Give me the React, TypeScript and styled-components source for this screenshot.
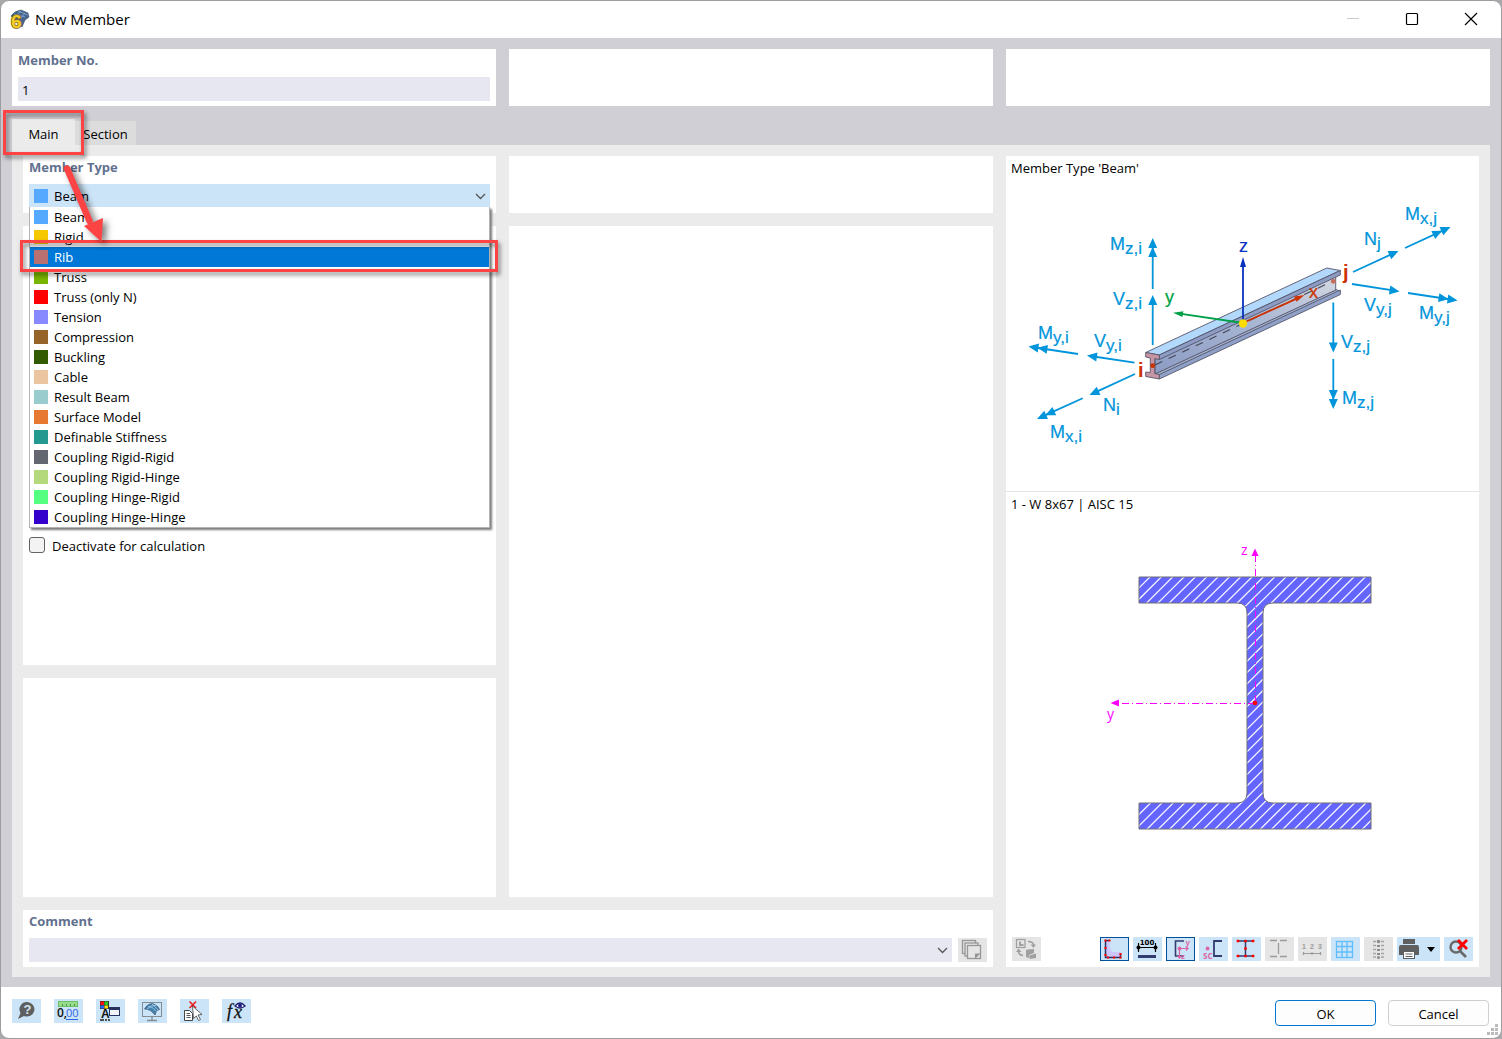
import React, { useState } from "react";
import styled, { createGlobalStyle, css } from "styled-components";

const GlobalStyle = createGlobalStyle`
  *, *::before, *::after { box-sizing: border-box; }
  body {
    margin: 0;
    background: #a9a9ac;
    font-family: "Open Sans", "Segoe UI", sans-serif;
    font-size: 13px;
    line-height: 20px;
    color: #000;
  }
  button, input, select { font: inherit; color: inherit; }
  svg { display: block; }
`;

const Window = styled.div`
  display: flex;
  flex-direction: column;
  min-height: 100vh;
  border: 1px solid #9d9d9f;
  border-radius: 9px;
  background: #fff;
  overflow: hidden;
`;

const TitleBar = styled.header`
  display: flex;
  align-items: center;
  height: 37px;
  padding: 0 8px;
`;

const Title = styled.h1`
  flex: 1;
  margin: 0 0 2px 6px;
  font-size: 15px;
  font-weight: 400;
`;

const WindowButtons = styled.div`
  display: flex;
  gap: 29px;
  padding-right: 7px;
  margin-bottom: 2px;
`;

const WindowButton = styled.button`
  width: 30px;
  height: 30px;
  padding: 0;
  border: 0;
  background: none;
`;

const Body = styled.main`
  flex: 1;
  display: flex;
  flex-direction: column;
  padding: 11px 11px 10px;
  background: #d0cfd5;
`;

const TopRow = styled.div`
  display: grid;
  grid-template-columns: repeat(3, 1fr);
  gap: 13px;
`;

const Card = styled.section`
  min-height: 57px;
  padding: 0 6px 5px;
  background: #fff;
`;

const CardTitle = styled.label`
  display: block;
  font-weight: 700;
  color: #62718f;
  line-height: 22px;
`;

const NumberInput = styled.input`
  display: block;
  width: 100%;
  height: 24px;
  margin-top: 6px;
  padding: 2px 4px 0;
  border: 0;
  background: #e7e7f1;
`;

const Tabs = styled.nav`
  display: flex;
  align-items: flex-end;
  margin-top: 13px;
`;

const TabSlot = styled.div`
  position: relative;
`;

const Tab = styled.button<{ $active?: boolean; $width: number }>`
  display: block;
  width: ${(p) => p.$width}px;
  height: ${(p) => (p.$active ? 26 : 24)}px;
  padding: ${(p) => (p.$active ? 4 : 2)}px 0 0;
  border: 0;
  background: ${(p) => (p.$active ? "#ebebeb" : "#dcdcdc")};
`;

const Panel = styled.div`
  flex: 1;
  display: grid;
  grid-template-columns: 1fr calc((100% - 4px) / 3) 1fr;
  grid-template-rows: 57px 2fr 1fr 57px;
  gap: 13px;
  padding: 11px 11px 10px;
  background: #ebebeb;
`;

const CenterCard = styled(Card)`
  grid-column: 2;
  grid-row: 2 / 4;
`;

const OptionsCard = styled(Card)`
  padding-top: 310px;
`;

const CommentCard = styled(Card)`
  grid-column: 1 / 3;
`;

const PreviewCard = styled(Card)`
  grid-column: 3;
  grid-row: 1 / 5;
  display: flex;
  flex-direction: column;
  padding: 0;
`;

const SelectBox = styled.div`
  position: relative;
  flex: 1;
`;

const Select = styled.select<{ $tone: "blue" | "plain" }>`
  display: block;
  width: 100%;
  height: ${(p) => (p.$tone === "blue" ? 23 : 24)}px;
  padding: 0 20px 0 25px;
  border: 0;
  border-radius: 0;
  appearance: none;
  background: ${(p) => (p.$tone === "blue" ? "#cce4f7" : "#e7e7f1")};
`;

const SelectArrow = styled.svg`
  position: absolute;
  right: 4px;
  top: 8px;
  pointer-events: none;
`;

const TypeRow = styled.div`
  position: relative;
  margin-top: 6px;
`;

const Swatch = styled.span<{ $color: string }>`
  width: 14px;
  height: 14px;
  margin-right: 6px;
  background: ${(p) => p.$color};
`;

const SelectSwatch = styled(Swatch)`
  position: absolute;
  left: 5px;
  top: 5px;
`;

const Popup = styled.ul`
  position: absolute;
  z-index: 5;
  top: 100%;
  left: 0;
  right: 0;
  margin: 0;
  padding: 0;
  list-style: none;
  border: 1px solid #b4b4b4;
  border-top: 0;
  background: #fff;
  box-shadow: 2px 2px 2px #7d7d7d;
  clip-path: inset(0 -6px -6px 0);
`;

const Option = styled.li<{ $selected: boolean }>`
  display: flex;
  align-items: center;
  height: 20px;
  padding-left: 4px;
  ${(p) =>
    p.$selected &&
    css`
      background: #0078d7;
      color: #fff;
    `}
`;

const Highlight = styled.span<{ $inset: string }>`
  position: absolute;
  z-index: 8;
  inset: ${(p) => p.$inset};
  border: 3px solid #fd4343;
  filter: drop-shadow(2px 3px 2px rgba(0, 0, 0, 0.5));
  pointer-events: none;
`;

const Pointer = styled.svg`
  position: absolute;
  z-index: 9;
  left: 46px;
  top: 39px;
  overflow: visible;
  filter: drop-shadow(4px 3px 3px rgba(0, 0, 0, 0.5));
  pointer-events: none;
`;

const CheckLabel = styled.label`
  display: flex;
  align-items: center;
  gap: 7px;
`;

const Checkbox = styled.input`
  width: 16px;
  height: 16px;
  margin: 0 0 2px;
  appearance: none;
  border: 1px solid #626262;
  border-radius: 3px;
  background: #f3f3f3;
`;

const CommentRow = styled.div`
  display: flex;
  gap: 6px;
  margin-top: 6px;
`;

const PreviewTop = styled.div`
  height: 336px;
  border-bottom: 1px solid #e5e5e5;
`;

const PreviewBottom = styled.div`
  flex: 1;
  display: flex;
  flex-direction: column;
`;

const Caption = styled.p`
  margin: 0;
  padding: 2px 5px;
`;

const Drawing = styled.svg`
  width: 100%;
  font-family: "Liberation Sans", Arial, sans-serif;
`;

const Toolbar = styled.div`
  display: flex;
  gap: 4px;
  margin-top: auto;
  padding: 0 6px 6px;
`;

const Spacer = styled.div`
  flex: 1;
`;

const IconButton = styled.button<{ $state?: "on" | "off"; $wide?: boolean }>`
  width: ${(p) => (p.$wide ? 43 : 29)}px;
  height: 24px;
  padding: 0;
  border: 0;
  background: ${(p) => (p.$state === "off" ? "#e5e5e5" : "#cce4f7")};
  outline: ${(p) => (p.$state === "on" ? "1px solid #00529b" : "none")};
  outline-offset: -1px;
`;

const Footer = styled.footer`
  position: relative;
  display: flex;
  align-items: center;
  gap: 12px;
  height: 51px;
  padding: 0 12px 0 11px;
`;

const FooterTools = styled.div`
  display: flex;
  gap: 13px;
  flex: 1;
  margin-bottom: 4px;
`;

const ActionButton = styled.button<{ $primary?: boolean }>`
  width: 101px;
  height: 26px;
  margin-top: 1px;
  padding: 2px 0 0;
  border: 1px solid ${(p) => (p.$primary ? "#0078d4" : "#cfcfcf")};
  border-radius: 4px;
  background: #fdfdfd;
  line-height: 20px;
`;

const Grip = styled.svg`
  position: absolute;
  right: 2px;
  bottom: 2px;
`;

const memberTypes: [string, string][] = [
  ["Beam", "#55aaff"],
  ["Rigid", "#f5c800"],
  ["Rib", "#b97070"],
  ["Truss", "#78b400"],
  ["Truss (only N)", "#ff0000"],
  ["Tension", "#8888ff"],
  ["Compression", "#966428"],
  ["Buckling", "#325a00"],
  ["Cable", "#ebc4a0"],
  ["Result Beam", "#99cccc"],
  ["Surface Model", "#e67832"],
  ["Definable Stiffness", "#23998f"],
  ["Coupling Rigid-Rigid", "#646670"],
  ["Coupling Rigid-Hinge", "#b4d97d"],
  ["Coupling Hinge-Rigid", "#55ff7f"],
  ["Coupling Hinge-Hinge", "#3300cc"],
];

const BLUE = "#0095db";

type ArrowProps = { from: [number, number]; to: [number, number]; color?: string; twin?: boolean; half?: number; head?: number };

function Arrow({ from, to, color = BLUE, twin, half = 4.5, head = 10 }: ArrowProps) {
  const dx = to[0] - from[0];
  const dy = to[1] - from[1];
  const len = Math.hypot(dx, dy);
  const angle = (Math.atan2(dy, dx) * 180) / Math.PI;
  return (
    <g transform={`translate(${from[0]} ${from[1]}) rotate(${angle})`} fill={color}>
      <rect x={0} y={-0.9} width={len - 5} height={1.8} />
      <polygon points={`${len},0 ${len - head},${-half} ${len - head},${half}`} />
      {twin && <polygon points={`${len - 9},0 ${len - 9 - head},${-half} ${len - 9 - head},${half}`} />}
    </g>
  );
}

function Force({ x, y, name, sub }: { x: number; y: number; name: string; sub: string }) {
  return (
    <text x={x} y={y} fontSize={18} fill={BLUE} stroke={BLUE} strokeWidth={0.2}>
      {name}
      <tspan dy={4} fontSize={17}>{sub}</tspan>
    </text>
  );
}

function BeamDrawing() {
  return (
    <Drawing viewBox="1006 180 473 310" height={310} role="img" aria-label="Member forces">
      <defs>
        <linearGradient id="web" x1="0" y1="1" x2="1" y2="0">
          <stop offset="0" stopColor="#8c9cc4" />
          <stop offset="0.5" stopColor="#a6b4d2" />
          <stop offset="1" stopColor="#d3d8e2" />
        </linearGradient>
      </defs>
      <g stroke="#56566a" strokeWidth="0.9" strokeLinejoin="round">
        <polygon fill="#a2b0cf" points="1154,374 1159.5,375 1340.5,291.5 1336,289.5" />
        <polygon fill="url(#web)" points="1155,357 1335.7,274 1335.7,290 1155,374" />
        <polygon fill="#b2d8fb" points="1145.7,352.5 1326.7,268 1340.3,270.5 1159.3,355" />
        <polygon fill="#8c9cc4" points="1159.3,355 1340.3,270.5 1340.3,275 1159.3,359.5" />
        <polygon fill="#8fa1c8" points="1159.3,374.5 1340.3,290 1340.3,294.5 1159.3,379" />
        <polygon
          fill="#c795a3"
          points="1145.7,352.5 1159.3,355 1159.3,359.5 1154.7,358.7 1154.7,373.5 1159.3,374.5 1159.3,379 1145.7,376.5 1145.7,372 1150.3,372.5 1150.3,358 1145.7,357"
        />
      </g>
      <path d="M1155 365 L1333 281" stroke="#454555" strokeWidth="1.1" strokeDasharray="8 7" />
      <circle cx="1152.7" cy="365.7" r="2.4" fill="#c83200" />
      <circle cx="1333.3" cy="281.3" r="2.4" fill="#c96b58" />

      <Arrow from={[1243, 323]} to={[1173, 312.7]} color="#00a046" half={3} />
      <Arrow from={[1243, 323]} to={[1243, 257]} color="#0a32be" half={3} />
      <Arrow from={[1243, 323]} to={[1304.5, 295]} color="#cd3200" half={3} />
      <circle cx="1243" cy="323.5" r="4.2" fill="#ffdc00" />

      <Arrow from={[1152.7, 289]} to={[1152.7, 238]} twin />
      <Arrow from={[1152.7, 345]} to={[1152.7, 295]} />
      <Arrow from={[1078, 354]} to={[1028.5, 346.5]} twin />
      <Arrow from={[1134.5, 362.7]} to={[1087, 355.5]} />
      <Arrow from={[1135, 374]} to={[1089.5, 395]} />
      <Arrow from={[1082.7, 398.3]} to={[1037, 419]} twin />
      <Arrow from={[1353, 272]} to={[1398.5, 251]} />
      <Arrow from={[1405, 248]} to={[1450.5, 227]} twin />
      <Arrow from={[1352, 284]} to={[1399.5, 291.5]} />
      <Arrow from={[1408, 293]} to={[1457.5, 300.5]} twin />
      <Arrow from={[1333.3, 302.5]} to={[1333.3, 352.5]} />
      <Arrow from={[1333.3, 359]} to={[1333.3, 409]} twin />

      <Force x={1110} y={249.5} name="M" sub="z,i" />
      <Force x={1113} y={304.5} name="V" sub="z,i" />
      <Force x={1038} y={338.5} name="M" sub="y,i" />
      <Force x={1094} y={347} name="V" sub="y,i" />
      <Force x={1103} y={411} name="N" sub="i" />
      <Force x={1050} y={438} name="M" sub="x,i" />
      <Force x={1364} y={245} name="N" sub="j" />
      <Force x={1405} y={220} name="M" sub="x,j" />
      <Force x={1364} y={311} name="V" sub="y,j" />
      <Force x={1419} y={318.5} name="M" sub="y,j" />
      <Force x={1341} y={348} name="V" sub="z,j" />
      <Force x={1342} y={403.5} name="M" sub="z,j" />
      <g fontSize={18} strokeWidth="0.2">
        <text x={1165} y={303} fill="#00a046" stroke="#00a046">y</text>
        <text x={1239} y={252} fill="#0a32be" stroke="#0a32be">z</text>
        <text x={1309} y={298} fill="#cd3200" stroke="#cd3200">x</text>
      </g>
      <g fontSize={20} fontWeight={700} fill="#cd3200">
        <text x={1138} y={377}>i</text>
        <text x={1343} y={279}>j</text>
      </g>
    </Drawing>
  );
}

const SECTION_OUTLINE =
  "M1139 577H1371V603H1273Q1263 603 1263 613V793Q1263 803 1273 803H1371V829H1139V803H1237Q1247 803 1247 793V613Q1247 603 1237 603H1139Z";

// Each hatch line satisfies x + y = constant.
const HATCH_STEP = 11.33;
const hatchLines = Array.from({ length: 44 }, (_, i) => {
  const sum = 1715.6 + i * HATCH_STEP;
  return `M${sum - 830} 830L${sum - 576} 576`;
}).join("");

function SectionDrawing() {
  return (
    <Drawing viewBox="1006 516 473 414" height={414} role="img" aria-label="Section W 8x67">
      <defs>
        <clipPath id="section">
          <path d={SECTION_OUTLINE} />
        </clipPath>
      </defs>
      <path d={SECTION_OUTLINE} fill="#6464ff" />
      <path d={hatchLines} clipPath="url(#section)" stroke="#f4f4ff" strokeWidth="1.3" />
      <path d={SECTION_OUTLINE} fill="none" stroke="#6e6e74" strokeWidth="1" />
      <g stroke="#ff00ff" strokeWidth="1" strokeDasharray="7 3 1 3">
        <path d="M1255.5 702V556" />
        <path d="M1255 703.5H1118" />
      </g>
      <g fill="#ff00ff">
        <polygon points="1255,548.5 1251.5,556 1258.5,556" />
        <polygon points="1110.5,703 1119,699.5 1119,706.5" />
        <text x="1241" y="555" fontSize="14" fontFamily="Open Sans">z</text>
        <text x="1107" y="719" fontSize="14" fontFamily="Open Sans">y</text>
      </g>
      <circle cx="1255" cy="703" r="2.3" fill="red" />
    </Drawing>
  );
}

const Glyph = ({ children, w = 29 }: { children: React.ReactNode; w?: number }) => (
  <svg width={w} height={24} viewBox={`0 0 ${w} 24`} fill="none" aria-hidden="true">
    {children}
  </svg>
);

const dots = (points: [number, number][], r = 1.3) =>
  points.map(([x, y]) => <rect key={`${x}-${y}`} x={x - r} y={y - r} width={2 * r} height={2 * r} rx={0.5} fill="#f00" />);

const OutlineIcon = () => (
  <Glyph>
    <path d="M5.5 3.5H9.5Q9.5 15 13 15H20.5V20.5H5.5Z" fill="#ccc5fb" />
    <path d="M9.5 3.5H5.5V20.5H20.5V17" stroke="#28325f" strokeWidth="1.5" />
    {dots([[5.5, 3.5], [9.5, 3.5], [5.5, 11], [5.5, 18], [8, 20.5], [14, 20.5], [20.5, 20.5], [20.5, 17]], 1.1)}
  </Glyph>
);

const DimensionIcon = () => (
  <Glyph>
    <text x="14" y="8" fontSize="7" fontWeight="700" fontFamily="DejaVu Sans" textAnchor="middle" fill="#000">100</text>
    <path d="M5.5 6V15M22.5 6V15M5 10.5H23" stroke="#000" strokeWidth="1.2" />
    <circle cx="5.5" cy="10.5" r="2" fill="#000" />
    <circle cx="22.5" cy="10.5" r="2" fill="#000" />
    <rect x="5" y="18" width="18" height="3" fill="#323c6e" />
  </Glyph>
);

const AxesIcon = () => (
  <Glyph>
    <path d="M18 4H9.5V19H18" stroke="#323c6e" strokeWidth="1.6" />
    <path d="M13 11.5H22M13.5 11.5V21M20 9.5L22 11.5L20 13.5M11.5 19L13.5 21L15.5 19" stroke="#dc64a5" strokeWidth="1.2" />
    <circle cx="13.5" cy="11.5" r="1.9" fill="#dc64a5" />
    <text x="19.5" y="8" fontSize="8" fontWeight="700" fontFamily="Liberation Sans" fill="#dc64a5">y</text>
    <text x="15" y="22" fontSize="8" fontWeight="700" fontFamily="Liberation Sans" fill="#dc64a5">z</text>
  </Glyph>
);

const ShearCenterIcon = () => (
  <Glyph>
    <path d="M23 4H15V19H23" stroke="#323c6e" strokeWidth="1.8" />
    <circle cx="8.5" cy="11.5" r="1.9" fill="#dc64a5" />
    <text x="4" y="22" fontSize="8" fontFamily="Open Sans" fontWeight="700" fill="#dc64a5">SC</text>
  </Glyph>
);

const BeamPointsIcon = () => (
  <Glyph>
    <path d="M5.5 4H21.5M5.5 19H21.5M13.5 4V19" stroke="#323c6e" strokeWidth="1.5" />
    {dots([[6, 4], [13.5, 4], [21, 4], [13.5, 11.5], [6, 19], [13.5, 19], [21, 19]])}
  </Glyph>
);

const BeamPartsIcon = () => (
  <Glyph>
    <path d="M5 3.5H12M15 3.5H22M5 19.5H12M15 19.5H22M13.5 6V17" stroke="#9b9b9b" strokeWidth="1.3" />
  </Glyph>
);

const NumbersIcon = () => (
  <Glyph>
    <text x="4" y="12" fontSize="7" fontWeight="700" fontFamily="Liberation Sans" fill="#9b9b9b">1</text>
    <text x="12" y="12" fontSize="7" fontWeight="700" fontFamily="Liberation Sans" fill="#9b9b9b">2</text>
    <text x="20" y="12" fontSize="7" fontWeight="700" fontFamily="Liberation Sans" fill="#9b9b9b">3</text>
    <path d="M5 16.5H23M5.5 15V18M14 15V18M22.5 15V18" stroke="#9b9b9b" strokeWidth="1.2" />
  </Glyph>
);

const GridIcon = () => (
  <Glyph>
    <rect x="5.5" y="4.5" width="16" height="16" stroke="#5fbeff" strokeWidth="1.3" />
    <path d="M11 4.5V20.5M16 4.5V20.5M5.5 9.5H21.5M5.5 15H21.5" stroke="#5fbeff" strokeWidth="1.3" />
  </Glyph>
);

const StressIcon = () => (
  <Glyph>
    <g fill="#8c8c8c">
      <circle cx="14.5" cy="4.5" r="1.7" />
      <rect x="13" y="8" width="3" height="2" />
      <rect x="13" y="12" width="3" height="2" />
      <rect x="13" y="16" width="3" height="2" />
      <circle cx="14.5" cy="20.5" r="1.5" />
    </g>
    <path d="M9 4.5H12M17 4.5H20M9 8.5H12M17 8.5H20M9 12.5H12M17 12.5H20M9 16.5H12M17 16.5H20M9 20H12M17 20H20" stroke="#a5a5a5" strokeWidth="1.3" />
  </Glyph>
);

const PrinterIcon = () => (
  <Glyph w={43}>
    <rect x="6" y="2" width="12" height="5" fill="#5f5f5f" />
    <path d="M2 10Q2 8 4 8H20Q22 8 22 10V18H18V14H6V18H2Z" fill="#5f5f5f" />
    <rect x="6.5" y="14.5" width="11" height="7" fill="#fff" stroke="#5f5f5f" />
    <path d="M8.5 17H15.5M8.5 19.5H15.5" stroke="#5f5f5f" />
    <path d="M30 10H38L34 15Z" fill="#000" />
  </Glyph>
);

const ResetZoomIcon = () => (
  <Glyph>
    <circle cx="12" cy="10" r="5.5" stroke="#696969" strokeWidth="2.4" />
    <path d="M16 14L22 20" stroke="#696969" strokeWidth="2.6" />
    <path d="M14 3L23 12M23 3L14 12" stroke="#f00" strokeWidth="2.8" />
  </Glyph>
);

const SwapViewIcon = () => (
  <Glyph>
    <rect x="4.5" y="2.5" width="8.5" height="8" stroke="#a0a0a0" strokeWidth="1.3" />
    <path d="M7 4.5V9H11.5V7H9V4.5Z" fill="#a0a0a0" />
    <path d="M16 4.5Q21 4.5 21.5 8M11 18.5Q6.5 18 6.5 14" stroke="#a0a0a0" strokeWidth="1.6" />
    <path d="M18.5 7.5H24L21.5 11ZM4 15L6.5 11.5L9.5 15Z" fill="#a0a0a0" />
    <path d="M14 13L15.5 12.5L22 12V16L17 18V21L14 20ZM17.5 18.5L24 16.5V21L17.5 22Z" fill="#a0a0a0" />
  </Glyph>
);

const CopiesIcon = () => (
  <Glyph>
    <g stroke="#969696" strokeWidth="1.3" fill="#e5e5e5">
      <rect x="4.5" y="2.5" width="13" height="13" />
      <rect x="7" y="5" width="13" height="13" />
      <rect x="9.5" y="7.5" width="13" height="13" />
    </g>
    <path d="M17 15.5H22.5L17 21Z" fill="#969696" />
  </Glyph>
);

const HelpIcon = () => (
  <Glyph>
    <path d="M15.5 3A7.5 7.3 0 1 1 12 17L6 20L8.5 14A7.5 7.3 0 0 1 15.5 3Z" fill="#5f5f5f" />
    <text x="15.5" y="15" fontSize="13" fontWeight="700" fontFamily="Liberation Sans" textAnchor="middle" fill="#d5e7f5">?</text>
  </Glyph>
);

const UnitsIcon = () => (
  <Glyph>
    <rect x="4.5" y="2.5" width="19" height="5" fill="#96dc8c" stroke="#6ebe64" />
    <path d="M8.5 5V7M12.5 5V7M16.5 5V7M20.5 5V7" stroke="#50964b" />
    <text x="3" y="18" fontSize="12" fontFamily="Open Sans" fontWeight="600" fill="#111">0,</text>
    <text x="12" y="18" fontSize="11" fontFamily="Open Sans" fill="#2d64e6">00</text>
    <path d="M12 20.5H24" stroke="#2d64e6" />
  </Glyph>
);

const DisplayIcon = () => (
  <Glyph>
    <rect x="4" y="2" width="9" height="8" fill="#333" />
    <rect x="4.5" y="2.5" width="3.5" height="3.5" fill="#f11" />
    <rect x="8.5" y="2.5" width="3.5" height="3.5" fill="#2c2" />
    <rect x="4.5" y="6.5" width="3.5" height="3" fill="#26f" />
    <rect x="8.500" y="6.5" width="3.5" height="3" fill="#fd0" />
    <text x="5" y="19" fontSize="12" fontFamily="Liberation Sans" fontWeight="700" fill="#111">A</text>
    <path d="M4 21H8M9 21H11M12 21H14" stroke="#222" strokeWidth="1.5" />
    <rect x="13.5" y="8.5" width="10" height="8" fill="#f3f3fa" stroke="#28325f" />
    <rect x="13" y="8" width="11" height="3" fill="#28325f" />
  </Glyph>
);

const MonitorIcon = () => (
  <Glyph>
    <rect x="4.5" y="3.5" width="19" height="14" stroke="#828c96" />
    <path d="M14 18V21M9 21.5H19" stroke="#828c96" strokeWidth="1.4" />
    <path d="M6.500 10Q9 5 14.5 4.500Q20 6 21.5 10.500L18.500 11.5L17 16Q13 10 6.500 10Z" fill="#4682af" stroke="#37506e" strokeWidth="0.7" />
    <path d="M10 7Q15 8 18 12M14 5Q17 7 20 11M9 10Q13 6 19 6" stroke="#b4dcf5" strokeWidth="0.7" />
  </Glyph>
);

const SelectIcon = () => (
  <Glyph>
    <path d="M4.5 11.5H9.5L12.5 14.5V21.5H4.5Z" fill="#fff" stroke="#444" />
    <path d="M6.5 14.5H10M6.5 16.5H10.5M6.5 18.5H10.5" stroke="#555" />
    <path d="M9.5 2.5L16 9M16 2.5L9.5 9" stroke="#f01414" strokeWidth="1.5" />
    <path d="M12.500 7L22 15.5L18 16L20.5 20.5L18.5 21.5L16.3 17L13.500 19.5Z" fill="#fff" stroke="#555" strokeWidth="0.9" />
  </Glyph>
);

const FormulaIcon = () => (
  <Glyph>
    <text x="5" y="18" fontSize="18" fontStyle="italic" fontFamily="Liberation Serif" fill="#111" stroke="#111" strokeWidth="0.3">f</text>
    <text x="12" y="19" fontSize="18" fontStyle="italic" fontFamily="Liberation Serif" fill="#111" stroke="#111" strokeWidth="0.3">x</text>
    <path d="M13 7Q18 1 23 7Q18 11 13 7Z" fill="#fff" stroke="#1e1e6e" strokeWidth="1.3" />
    <circle cx="18" cy="6.5" r="2" fill="#1e1e8c" />
  </Glyph>
);

const viewTools: { label: string; icon: React.ReactNode; state?: "on" | "off"; wide?: boolean }[] = [
  { label: "Outline points", icon: <OutlineIcon />, state: "on" },
  { label: "Dimensions", icon: <DimensionIcon /> },
  { label: "Principal axes", icon: <AxesIcon />, state: "on" },
  { label: "Shear center", icon: <ShearCenterIcon /> },
  { label: "Section points", icon: <BeamPointsIcon /> },
  { label: "Section parts", icon: <BeamPartsIcon />, state: "off" },
  { label: "Numbering", icon: <NumbersIcon />, state: "off" },
  { label: "Grid", icon: <GridIcon /> },
  { label: "Stress points", icon: <StressIcon />, state: "off" },
  { label: "Print", icon: <PrinterIcon />, wide: true },
  { label: "Reset zoom", icon: <ResetZoomIcon /> },
];

const footerTools: [string, React.ReactNode][] = [
  ["Help", <HelpIcon />],
  ["Units", <UnitsIcon />],
  ["Display properties", <DisplayIcon />],
  ["View", <MonitorIcon />],
  ["Deselect", <SelectIcon />],
  ["Formula", <FormulaIcon />],
];

const Chevron = () => (
  <SelectArrow width="11" height="9" viewBox="0 0 11 9" fill="none">
    <path d="M1 2L5.5 6.5L10 2" stroke="#555" strokeWidth="1.3" />
  </SelectArrow>
);

const AppIcon = () => (
  <svg width="20" height="20" viewBox="0 0 20 20" overflow="visible" aria-hidden="true">
    <path d="M2 6Q5 1 12 0L19 3L20 7L16 10L13 17L8 12Z" fill="#46648c" stroke="#374b64" strokeWidth="0.6" />
    <path d="M5 4L16 7M9 1L19 5M12 1L7 6M16 3L12 8" stroke="#8cb4dc" strokeWidth="0.7" />
    <text x="2" y="18" fontSize="19" fontWeight="700" fontFamily="Liberation Sans" fill="#f5cd28" stroke="#7d691e" strokeWidth="1.6" paintOrder="stroke">6</text>
  </svg>
);

export default function App() {
  const [number, setNumber] = useState("1");
  const [highlighted, setHighlighted] = useState("Rib");

  return (
    <>
      <GlobalStyle />
      <Window>
        <TitleBar>
          <AppIcon />
          <Title>New Member</Title>
          <WindowButtons>
            <WindowButton aria-label="Minimize">
              <svg width="30" height="30"><path d="M9 14.5H21" stroke="#ccc" /></svg>
            </WindowButton>
            <WindowButton aria-label="Maximize">
              <svg width="30" height="30"><rect x="9.5" y="9.5" width="11" height="11" rx="1" fill="none" stroke="#000" strokeWidth="1.2" /></svg>
            </WindowButton>
            <WindowButton aria-label="Close">
              <svg width="30" height="30"><path d="M9 9L21 21M21 9L9 21" stroke="#000" strokeWidth="1.2" /></svg>
            </WindowButton>
          </WindowButtons>
        </TitleBar>

        <Body>
          <TopRow>
            <Card>
              <CardTitle htmlFor="member-no">Member No.</CardTitle>
              <NumberInput id="member-no" value={number} onChange={(e) => setNumber(e.target.value)} />
            </Card>
            <Card />
            <Card />
          </TopRow>

          <Tabs>
            <TabSlot>
              <Tab $active $width={63}>Main</Tab>
              <Highlight $inset="-9px -9px -10px -9px" />
              <Pointer width="60" height="90" viewBox="0 0 60 90">
                <path d="M9 10.5L31.5 63" stroke="#fd4343" strokeWidth="6.5" strokeLinecap="round" />
                <polygon points="26,68 45,60 43.5,84" fill="#fd4343" />
              </Pointer>
            </TabSlot>
            <Tab $width={61}>Section</Tab>
          </Tabs>

          <Panel>
            <Card>
              <CardTitle htmlFor="member-type">Member Type</CardTitle>
              <TypeRow>
                <Select id="member-type" $tone="blue" defaultValue="Beam">
                  {memberTypes.map(([name]) => (
                    <option key={name}>{name}</option>
                  ))}
                </Select>
                <SelectSwatch $color="#55aaff" />
                <Chevron />
                <Popup role="listbox" aria-label="Member types">
                  {memberTypes.map(([name, color]) => (
                    <Option
                      key={name}
                      role="option"
                      aria-selected={name === highlighted}
                      $selected={name === highlighted}
                      onMouseEnter={() => setHighlighted(name)}
                    >
                      <Swatch $color={color} />
                      {name}
                    </Option>
                  ))}
                </Popup>
                <Highlight $inset="56px -8px -65px -9px" />
              </TypeRow>
            </Card>
            <Card />
            <PreviewCard>
              <PreviewTop>
                <Caption>Member Type 'Beam'</Caption>
                <BeamDrawing />
              </PreviewTop>
              <PreviewBottom>
                <Caption>1 - W 8x67 | AISC 15</Caption>
                <SectionDrawing />
                <Toolbar>
                  <IconButton $state="off" aria-label="Swap view"><SwapViewIcon /></IconButton>
                  <Spacer />
                  {viewTools.map((t) => (
                    <IconButton key={t.label} aria-label={t.label} $state={t.state} $wide={t.wide}>
                      {t.icon}
                    </IconButton>
                  ))}
                </Toolbar>
              </PreviewBottom>
            </PreviewCard>
            <OptionsCard>
              <CheckLabel>
                <Checkbox type="checkbox" />
                Deactivate for calculation
              </CheckLabel>
            </OptionsCard>
            <CenterCard />
            <Card />
            <CommentCard>
              <CardTitle htmlFor="comment">Comment</CardTitle>
              <CommentRow>
                <SelectBox>
                  <Select id="comment" $tone="plain" defaultValue="">
                    <option value="" />
                  </Select>
                  <Chevron />
                </SelectBox>
                <IconButton $state="off" aria-label="Comment library"><CopiesIcon /></IconButton>
              </CommentRow>
            </CommentCard>
          </Panel>
        </Body>

        <Footer>
          <FooterTools>
            {footerTools.map(([label, icon]) => (
              <IconButton key={label} aria-label={label}>{icon}</IconButton>
            ))}
          </FooterTools>
          <ActionButton $primary>OK</ActionButton>
          <ActionButton>Cancel</ActionButton>
          <Grip width="12" height="12" fill="#bbb">
            <rect x="8" y="0" width="3" height="3" />
            <rect x="4" y="4" width="3" height="3" />
            <rect x="8" y="4" width="3" height="3" />
            <rect x="0" y="8" width="3" height="3" />
            <rect x="4" y="8" width="3" height="3" />
            <rect x="8" y="8" width="3" height="3" />
          </Grip>
        </Footer>
      </Window>
    </>
  );
}
